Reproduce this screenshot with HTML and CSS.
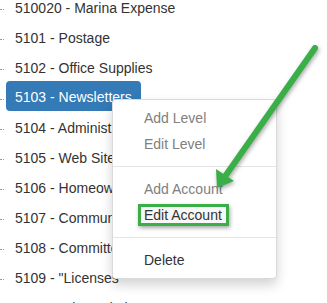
FILE: index.html
```html
<!DOCTYPE html>
<html>
<head>
<meta charset="utf-8">
<link rel="stylesheet" href="styles.css">
</head>
<body>
<ul class="tree">
  <li><span class="conn"></span><a class="node">510020 - Marina Expense</a></li>
  <li><span class="conn"></span><a class="node">5101 - Postage</a></li>
  <li><span class="conn"></span><a class="node">5102 - Office Supplies</a></li>
  <li><span class="conn"></span><a class="node selected">5103 - Newsletters</a></li>
  <li><span class="conn"></span><a class="node">5104 - Administration</a></li>
  <li><span class="conn"></span><a class="node">5105 - Web Site</a></li>
  <li><span class="conn"></span><a class="node">5106 - Homeowners</a></li>
  <li><span class="conn"></span><a class="node">5107 - Communications</a></li>
  <li><span class="conn"></span><a class="node">5108 - Committees</a></li>
  <li><span class="conn"></span><a class="node">5109 - "Licenses</a></li>
  <li><span class="conn"></span><a class="node">5110 - Other Admin Expense</a></li>
</ul>

<ul class="menu">
  <li class="item disabled">Add Level</li>
  <li class="item disabled">Edit Level</li>
  <li class="divider"></li>
  <li class="item disabled">Add Account</li>
  <li class="item"><span class="highlight">Edit Account</span></li>
  <li class="divider"></li>
  <li class="item">Delete</li>
</ul>

<svg class="arrow" width="327" height="303" viewBox="0 0 327 303">
  <line x1="315" y1="48" x2="226" y2="175" stroke="#3aaf47" stroke-width="6" stroke-linecap="round"/>
  <polygon points="217,188 216,169 234,181" fill="#3aaf47"/>
</svg>
</body>
</html>
```

FILE: styles.css
```css
html, body {
  margin: 0;
  padding: 0;
  background: #fff;
}
body {
  width: 327px;
  height: 303px;
  overflow: hidden;
  position: relative;
  font-family: "Liberation Sans", Arial, sans-serif;
  font-size: 14px;
  color: #333;
}
.tree {
  list-style: none;
  margin: -7px 0 0 0;
  padding: 0;
}
.tree li {
  height: 30px;
  line-height: 30px;
  white-space: nowrap;
}
.conn {
  display: inline-block;
  width: 4px;
  height: 0;
  border-top: 1px dotted #999;
  vertical-align: middle;
  margin-right: 2px;
}
.node {
  display: inline-block;
  padding: 0 9px;
  vertical-align: top;
  color: #333;
}
.node.selected {
  background: #337ab7;
  color: #fff;
  border-radius: 4px;
  line-height: 27px;
  padding-top: 3px;
  margin-top: -2px;
}
.menu {
  position: absolute;
  left: 112px;
  top: 99px;
  width: 165px;
  box-sizing: border-box;
  margin: 0;
  padding: 5px 0;
  list-style: none;
  background: #fff;
  border: 1px solid rgba(0,0,0,.15);
  border-radius: 4px;
  box-shadow: 0 6px 12px rgba(0,0,0,.175);
}
.item {
  padding: 3px 20px 3px 31px;
  height: 20px;
  line-height: 20px;
  color: #333;
  white-space: nowrap;
}
.item.disabled {
  color: #808080;
}
.divider {
  height: 1px;
  margin: 9px 0;
  background: #e5e5e5;
}
.highlight {
  display: inline-block;
  vertical-align: top;
  margin: -1px 0 -1px -6px;
  padding: 0 4px 0 3px;
  line-height: 16px;
  border: 3px solid #3aaf47;
  background: #f7f7f7;
  box-shadow: 1px 2px 4px rgba(0,0,0,.35);
}
.arrow {
  position: absolute;
  left: 0;
  top: 0;
  filter: drop-shadow(1px 2px 2px rgba(0,0,0,.35));
}
```
